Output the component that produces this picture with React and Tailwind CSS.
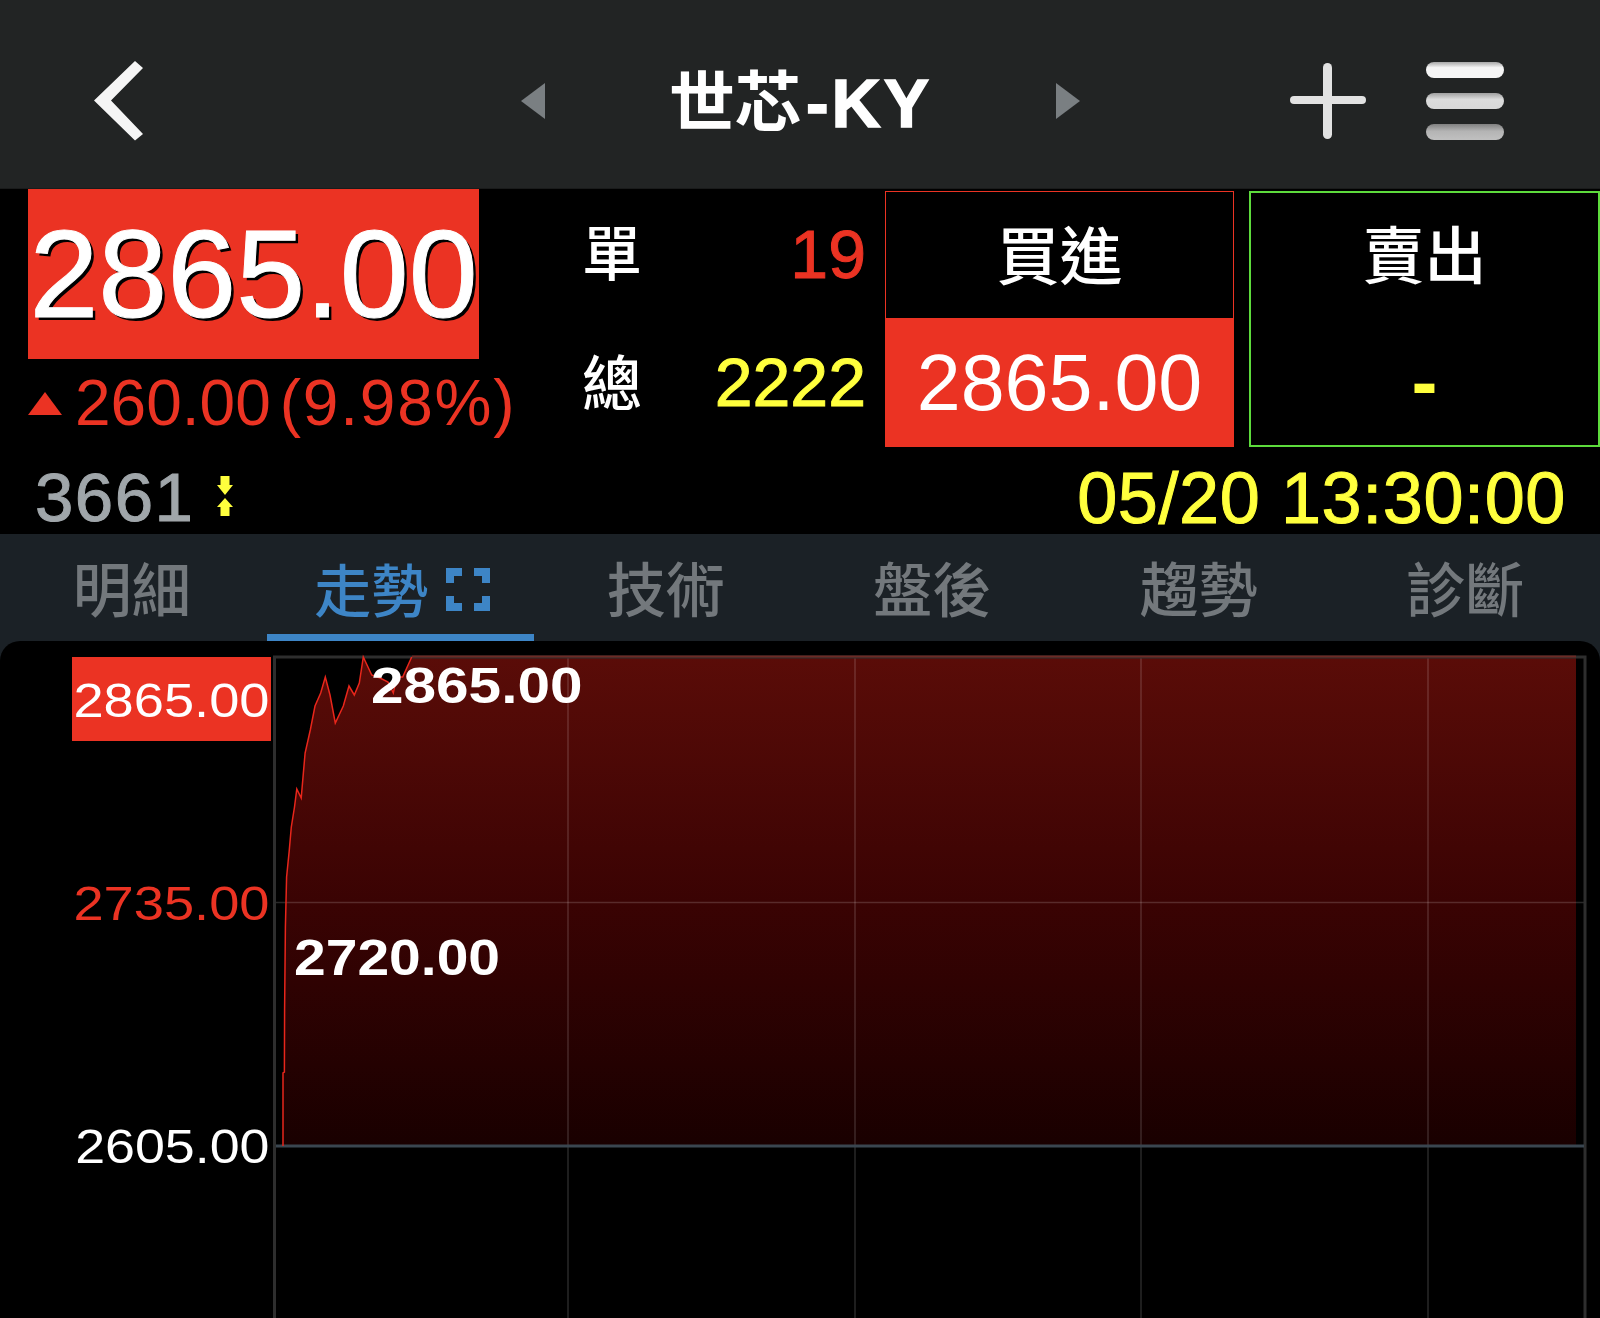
import React from 'react';

const tabs = ['明細', '走勢', '技術', '盤後', '趨勢', '診斷'];

const linePoints = [
  [283, 1146], [283, 1073], [284.4, 1072], [284.6, 1010], [285.4, 927], [286.6, 877], [289.3, 850], [291.3, 827],
  [294.5, 807], [296.8, 789], [301.2, 798], [305.1, 753], [310.3, 730], [315, 706],
  [320.7, 693], [325.3, 677], [330, 695], [335.3, 723], [343.3, 706], [349, 686],
  [354.3, 695], [359.3, 683], [363.3, 657], [371.7, 675], [380, 678], [388, 682], [393.3, 693],
  [396.7, 677], [402.7, 677], [411.7, 657],
];

function FrameIcon() {
  return (
    <svg className="-mt-[6px]" width="44" height="43" viewBox="0 0 44 43" fill="none" stroke="#3d85c6" strokeWidth="8">
      <path d="M4 15V4H16" />
      <path d="M28 4H40V15" />
      <path d="M4 28V39H16" />
      <path d="M28 39H40V28" />
    </svg>
  );
}

function PriceChart() {
  const line = linePoints.map((p) => p.join(',')).join(' ');
  return (
    <svg className="absolute inset-0" width="1600" height="677" viewBox="0 641 1600 677">
      <defs>
        <linearGradient id="area" x1="0" y1="0" x2="0" y2="1">
          <stop offset="0" stopColor="#5a0c08" />
          <stop offset="0.5" stopColor="#3a0303" />
          <stop offset="1" stopColor="#190000" />
        </linearGradient>
      </defs>
      <path d={`M${line} L1576,657 L1576,1146 Z`} fill="url(#area)" />
      <g stroke="#ffffff" strokeOpacity="0.16" strokeWidth="1.5">
        {[568, 855, 1141, 1428].map((x) => (
          <line key={x} x1={x} y1="657" x2={x} y2="1318" />
        ))}
        <line x1="276" y1="902.5" x2="1584" y2="902.5" />
      </g>
      <path d="M274.5 1318V657H1585V1318" fill="none" stroke="#2e2e2e" strokeWidth="3" />
      <path d="M412 656.5H1576" stroke="#6d2a25" strokeWidth="2" />
      <line x1="276" y1="1146" x2="1584" y2="1146" stroke="#3a4650" strokeWidth="3" />
      <polyline points={line} fill="none" stroke="#e8261b" strokeWidth="1.5" />
    </svg>
  );
}

export default function App() {
  return (
    <div className="w-[1600px] h-[1318px] overflow-hidden bg-black text-white [font-family:'Liberation_Sans','Noto_Sans_CJK_TC',sans-serif]">
      {/* Title bar */}
      <header className="h-[189px] pt-[14px] bg-[#222424] flex items-center border-b border-[#1a1b1b]">
        <svg className="ml-[94px] shrink-0" width="49" height="80" viewBox="0 0 49 80" fill="#f5f5f5">
          <polygon points="41,0 49,7 17,39.5 49,73 41,79.5 0,39.5" />
        </svg>
        <div className="ml-[378px] w-0 h-0 border-y-[18px] border-y-transparent border-r-[24px] border-r-[#7a7f82]" />
        <div className="w-[511px] mt-[3px] flex justify-center items-center text-[66px] font-bold leading-none">
          <span>世芯</span>
          <span className="ml-[5px] text-[68px] tracking-[3px] [-webkit-text-stroke:1.5px_#fff]">-KY</span>
        </div>
        <div className="w-0 h-0 border-y-[18px] border-y-transparent border-l-[24px] border-l-[#7a7f82]" />
        <div className="ml-[210px] relative w-[76px] h-[76px] shrink-0">
          <div className="absolute left-0 right-0 top-[33px] h-[8px] rounded-full bg-[#e2e2e2]" />
          <div className="absolute top-0 bottom-0 left-[33px] w-[9px] rounded-full bg-[#e2e2e2]" />
        </div>
        <div className="ml-[60px] w-[78px] flex flex-col gap-[15px]">
          <div className="h-[16px] rounded-full bg-linear-to-b from-[#a8a8a8] via-[#f5f5f5] via-35% to-[#f5f5f5]" />
          <div className="h-[16px] rounded-full bg-linear-to-b from-[#a0a0a0] via-[#dcdcdc] via-40% to-[#d8d8d8]" />
          <div className="h-[16px] rounded-full bg-linear-to-b from-[#808080] via-[#b4b4b4] via-45% to-[#c0c0c0]" />
        </div>
      </header>

      {/* Quote */}
      <section className="h-[258px] flex">
        <div className="ml-[28px] w-[500px] shrink-0">
          <div className="w-[451px] h-[170px] bg-[#eb3323] flex items-center justify-center text-[124px] leading-none [text-shadow:3px_3px_0_#000] [-webkit-text-stroke:1px_#fff]">
            2865.00
          </div>
          <div className="h-[88px] flex items-center text-[#eb3323] text-[64px] leading-none">
            <div className="w-0 h-0 border-x-[17px] border-x-transparent border-b-[23px] border-b-[#eb3323] mr-[13px]" />
            <span>260.00</span>
            <span className="ml-[9px] tracking-[1.8px]">(9.98%)</span>
          </div>
        </div>
        <div className="ml-[59px] w-[279px] shrink-0 mt-[1px] flex flex-col">
          <div className="h-[128px] flex items-center justify-between">
            <span className="text-[60px] leading-none font-medium mt-[3px] -ml-[5px]">單</span>
            <span className="text-[68px] leading-none text-[#eb3323] [-webkit-text-stroke:1px_#eb3323]">19</span>
          </div>
          <div className="h-[128px] flex items-center justify-between">
            <span className="text-[60px] leading-none font-medium mt-[7px] -ml-[5px]">總</span>
            <span className="text-[68px] leading-none text-[#ffff3d] [-webkit-text-stroke:1px_#ffff3d]">2222</span>
          </div>
        </div>
        <div className="ml-[19px] w-[349px] h-[256px] mt-[2px] shrink-0 border border-[#eb3323] flex flex-col">
          <div className="h-[127px] flex items-center justify-center text-[63px] leading-none font-medium pt-[3px]">買進</div>
          <div className="flex-1 -m-px bg-[#eb3323] flex items-center justify-center text-[79px] leading-none">2865.00</div>
        </div>
        <div className="ml-[15px] flex-1 h-[256px] mt-[2px] border-2 border-[#5ddb3c] flex flex-col">
          <div className="h-[126px] flex items-center justify-center text-[62px] leading-none font-medium pt-[3px]">賣出</div>
          <div className="flex-1 flex items-center justify-center text-[78px] leading-none font-bold text-[#ffff3d]">-</div>
        </div>
      </section>

      {/* Symbol and time */}
      <section className="h-[87px] flex items-center justify-between pt-[14px] pl-[35px] pr-[34px]">
        <div className="flex items-center">
          <span className="text-[69px] leading-none tracking-[1.5px] text-[#a0a6aa] [-webkit-text-stroke:1px_#a0a6aa]">3661</span>
          <svg className="ml-[22px] -mt-[3px]" width="16" height="40" viewBox="0 0 16 40" fill="#ffff3d">
            <path d="M3.500 0H12.500V9H16L8 19L0 9H3.500Z" />
            <path d="M8 22L16 31H12.500V40H3.500V31H0Z" />
          </svg>
        </div>
        <span className="text-[72px] leading-none tracking-[0.6px] text-[#ffff3d] [-webkit-text-stroke:1px_#ffff3d]">05/20 13:30:00</span>
      </section>

      <div className="bg-[#1b2126]">
        {/* Tabs */}
        <nav className="h-[107px] flex">
          {tabs.map((tab) => {
            const active = tab === '走勢';
            return (
              <div
                key={tab}
                className={`flex-1 flex items-center justify-center gap-[18px] leading-none font-medium pt-[16px] border-b-[7px] ${active ? 'text-[57px] pl-[4px] border-[#3d85c6] text-[#3d85c6]' : 'text-[59px] pr-[3px] border-transparent text-[#73787c]'}`}
              >
                {tab}
                {active && <FrameIcon />}
              </div>
            );
          })}
        </nav>

        {/* Chart */}
        <div className="relative h-[677px] bg-black rounded-t-[20px] overflow-hidden">
          <PriceChart />
          <div className="absolute left-[72px] top-[16px] w-[199px] h-[84px] bg-[#eb3323] flex items-center justify-end pr-[1px] pt-[3px] text-[48px] leading-none">
            <span className="inline-block origin-right scale-x-[1.13]">2865.00</span>
          </div>
          <div className="absolute right-[1330px] top-[239px] text-[48px] leading-none text-[#eb3323]">
            <span className="inline-block origin-right scale-x-[1.13]">2735.00</span>
          </div>
          <div className="absolute right-[1330px] top-[482px] text-[48px] leading-none">
            <span className="inline-block origin-right scale-x-[1.12]">2605.00</span>
          </div>
          <div className="absolute left-[371px] top-[20px] text-[50px] font-bold leading-none">
            <span className="inline-block origin-left scale-x-[1.17]">2865.00</span>
          </div>
          <div className="absolute left-[294px] top-[292px] text-[50px] font-bold leading-none">
            <span className="inline-block origin-left scale-x-[1.14]">2720.00</span>
          </div>
        </div>
      </div>
    </div>
  );
}
